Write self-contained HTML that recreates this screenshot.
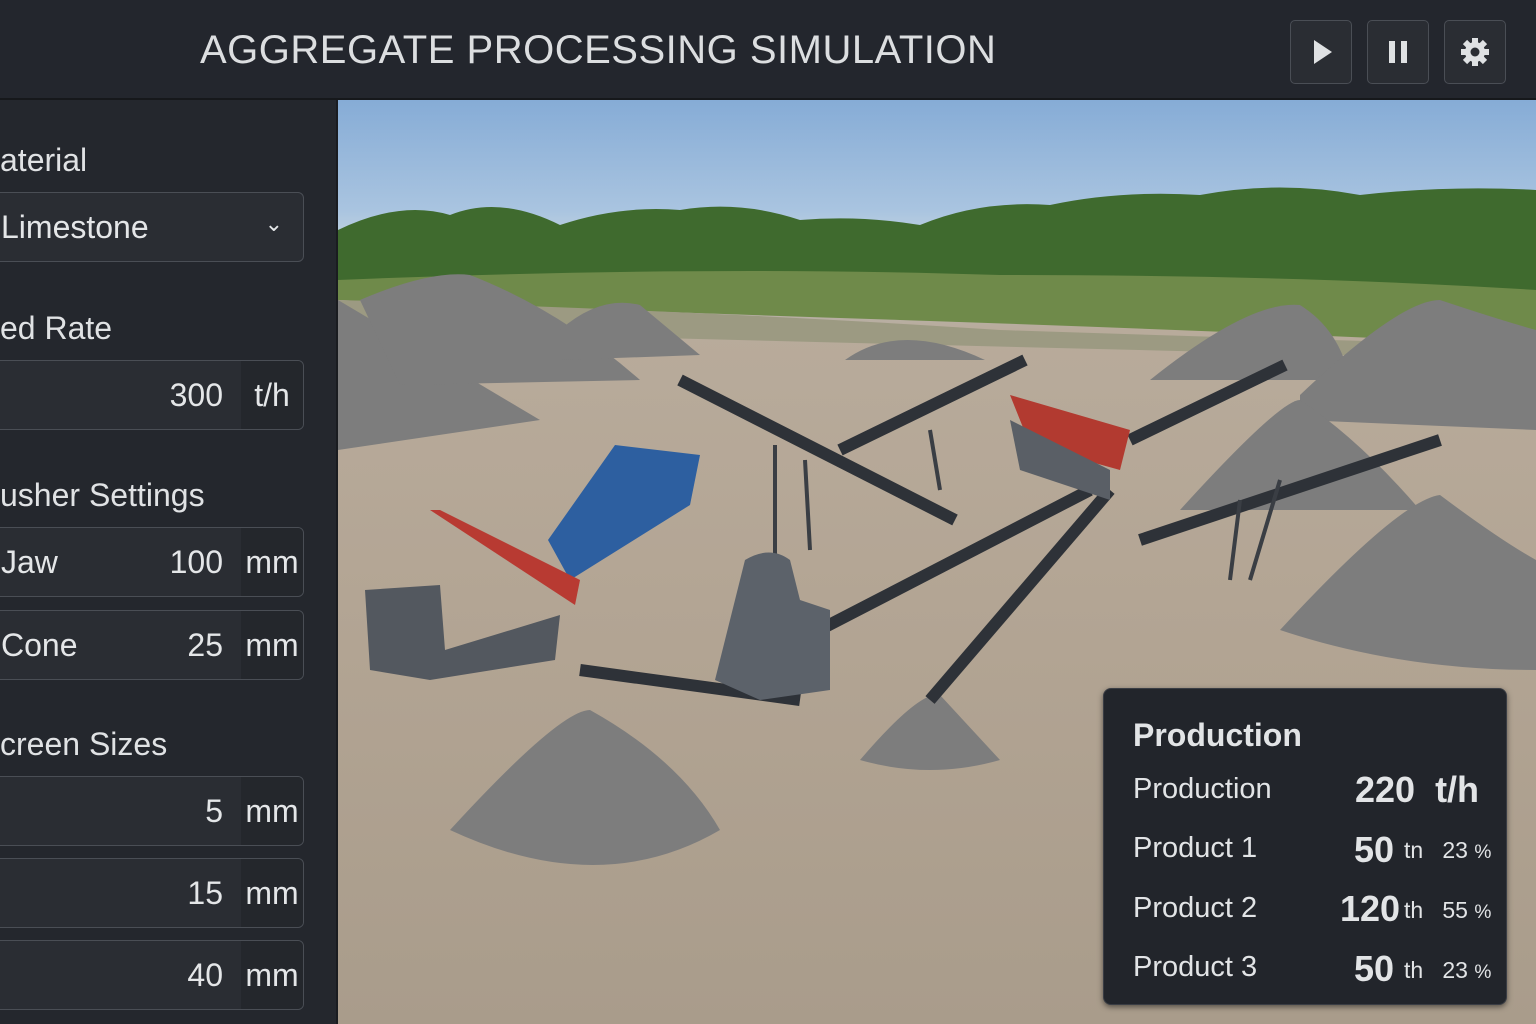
<!DOCTYPE html><html><head><style>
body{margin:0;width:1536px;height:1024px;overflow:hidden;background:#23262c;font-family:"Liberation Sans",sans-serif;color:#e4e6e8;position:relative}
.hdr{position:absolute;left:0;top:0;width:1536px;height:98px;background:#23262d;border-bottom:2px solid #16181b}
.title{position:absolute;left:200px;top:28px;font-size:40px;letter-spacing:0.5px;color:#dcdee0}
.btn{position:absolute;top:20px;width:60px;height:62px;border:1px solid #4a4e55;border-radius:5px;background:#2a2d33}
.btn svg{position:absolute;left:15px;top:16px}
.side{position:absolute;left:0;top:100px;width:336px;height:924px;background:#24272d;border-right:2px solid #1a1c20}
.lbl{position:absolute;left:0;font-size:32px;color:#e0e2e4}
.in{position:absolute;left:-10px;width:312px;height:68px;border:1px solid #4a4e55;border-radius:6px;background:#2a2d33;font-size:32px;overflow:hidden}
.in .u{position:absolute;right:0;top:0;bottom:0;width:62px;background:#24272c;text-align:center;line-height:68px}
.in .v{position:absolute;right:80px;line-height:68px}
.in .n{position:absolute;left:10px;line-height:68px}
.scene{position:absolute;left:338px;top:100px;width:1198px;height:924px;overflow:hidden;background:linear-gradient(#86acd6 0,#a9c4e0 110px,#b8cde0 130px,#b8ab9b 230px,#b3a594 500px,#a99c8b 924px)}
.prod{position:absolute;left:1103px;top:688px;width:402px;height:315px;background:#22252b;border:1px solid #3a3d44;border-radius:8px;box-shadow:0 2px 6px rgba(0,0,0,.5)}
.prod div{position:absolute;font-size:29px;color:#e2e4e6}
.b{font-weight:600}
</style></head><body>
<div class="hdr"><div class="title">AGGREGATE PROCESSING SIMULATION</div>
<div class="btn" style="left:1290px"><svg width="30" height="30"><path d="M8 3 L26 15 L8 27Z" fill="#dfe1e3"/></svg></div>
<div class="btn" style="left:1367px"><svg width="30" height="30"><rect x="6" y="4" width="6" height="22" fill="#dfe1e3"/><rect x="18" y="4" width="6" height="22" fill="#dfe1e3"/></svg></div>
<div class="btn" style="left:1444px"><svg width="30" height="30" viewBox="0 0 30 30"><g fill="#dfe1e3"><circle cx="15" cy="15" r="10"/><g stroke="#dfe1e3" stroke-width="6"><path d="M15 1v28M1 15h28M5 5l20 20M25 5L5 25"/></g></g><circle cx="15" cy="15" r="4.5" fill="#2a2d33"/></svg></div>
</div>
<div class="side">
<div class="lbl" style="top:42px">aterial</div>
<div class="in" style="top:92px"><span class="n" style="left:10px">Limestone</span><span style="position:absolute;right:20px;top:18px;font-size:22px">&#8964;</span></div>
<div class="lbl" style="top:210px">ed Rate</div>
<div class="in" style="top:260px"><span class="v">300</span><span class="u">t/h</span></div>
<div class="lbl" style="top:377px">usher Settings</div>
<div class="in" style="top:427px"><span class="n">Jaw</span><span class="v">100</span><span class="u">mm</span></div>
<div class="in" style="top:510px"><span class="n">Cone</span><span class="v">25</span><span class="u">mm</span></div>
<div class="lbl" style="top:626px">creen Sizes</div>
<div class="in" style="top:676px"><span class="v">5</span><span class="u">mm</span></div>
<div class="in" style="top:758px"><span class="v">15</span><span class="u">mm</span></div>
<div class="in" style="top:840px"><span class="v">40</span><span class="u">mm</span></div>
</div>
<div class="scene"><svg width="1198" height="924" viewBox="338 100 1198 924">
<path d="M338 230 Q400 200 450 215 Q500 195 560 225 Q620 205 680 210 Q740 200 800 220 Q860 215 920 225 Q980 200 1050 205 Q1120 190 1200 195 Q1280 180 1360 195 Q1450 185 1536 190 L1536 290 L338 290Z" fill="#3f6a2e"/>
<path d="M338 280 Q700 265 1000 275 Q1300 275 1536 290 L1536 345 Q1200 330 900 320 Q600 310 338 300Z" fill="#6f8a4a"/>
<path d="M338 300 Q700 310 1000 330 Q1300 340 1536 345 L1536 360 L338 330Z" fill="#9c9a82"/>
<g fill="#7d7d7d"><path d="M338 300 L540 420 L338 450Z"/><path d="M360 300 Q430 270 470 275 Q560 310 640 380 L400 385Z"/><path d="M560 330 Q600 295 640 305 L700 355 L560 360Z"/><path d="M845 360 Q900 320 985 360Z"/><path d="M1150 380 Q1250 300 1300 305 Q1340 330 1350 380Z"/><path d="M1300 395 Q1400 300 1440 300 Q1500 320 1536 330 L1536 430 L1300 420Z"/><path d="M1180 510 Q1280 400 1300 400 Q1360 440 1420 510Z"/><path d="M1280 630 Q1400 500 1440 495 Q1500 540 1536 560 L1536 670 Q1400 670 1280 630Z"/><path d="M450 830 Q560 710 590 710 Q680 760 720 830 Q600 900 450 830Z"/><path d="M860 760 Q920 690 940 695 L1000 760 Q930 780 860 760Z"/></g>
<g stroke="#2e3238" stroke-width="12" fill="none"><path d="M680 380 L955 520"/><path d="M840 450 L1025 360"/><path d="M1130 440 L1285 365"/><path d="M1140 540 L1440 440"/><path d="M930 700 L1110 490"/><path d="M800 640 L1090 490"/><path d="M580 670 L800 700"/></g>
<g stroke="#3a3e44" stroke-width="4"><path d="M775 445 L775 560M805 460 L810 550M930 430 L940 490M1240 500 L1230 580M1280 480 L1250 580"/></g>
<path d="M548 540 L570 580 L690 505 L700 455 L615 445 Z" fill="#2d5fa0"/><path d="M430 510 L575 605 L580 580 L440 510Z" fill="#b83a32"/>
<path d="M365 590 L440 585 L445 650 L560 615 L555 660 L430 680 L370 670Z" fill="#53585f"/>
<path d="M745 560 Q770 545 790 560 L800 600 L830 610 L830 690 L760 700 L715 680 L735 600Z" fill="#5c626a"/>
<path d="M1010 395 L1130 430 L1120 470 L1030 445 Z" fill="#b23a30"/><path d="M1010 420 L1110 470 L1110 500 L1020 470Z" fill="#5a5f66"/>
</svg></div>
<div class="prod">
<div class="b" style="left:29px;top:28px;font-size:32px">Production</div>
<div style="left:29px;top:84px">Production</div><div class="b" style="left:251px;top:80px;font-size:36px">220 &nbsp;t/h</div>
<div style="left:29px;top:143px">Product 1</div><div class="b" style="left:250px;top:140px;font-size:36px">50</div><div style="left:300px;top:148px;font-size:23px">tn &nbsp;&nbsp;23 <small>%</small></div>
<div style="left:29px;top:203px">Product 2</div><div class="b" style="left:236px;top:199px;font-size:36px">120</div><div style="left:300px;top:208px;font-size:23px">th &nbsp;&nbsp;55 <small>%</small></div>
<div style="left:29px;top:262px">Product 3</div><div class="b" style="left:250px;top:259px;font-size:36px">50</div><div style="left:300px;top:268px;font-size:23px">th &nbsp;&nbsp;23 <small>%</small></div>
</div>
</body></html>
